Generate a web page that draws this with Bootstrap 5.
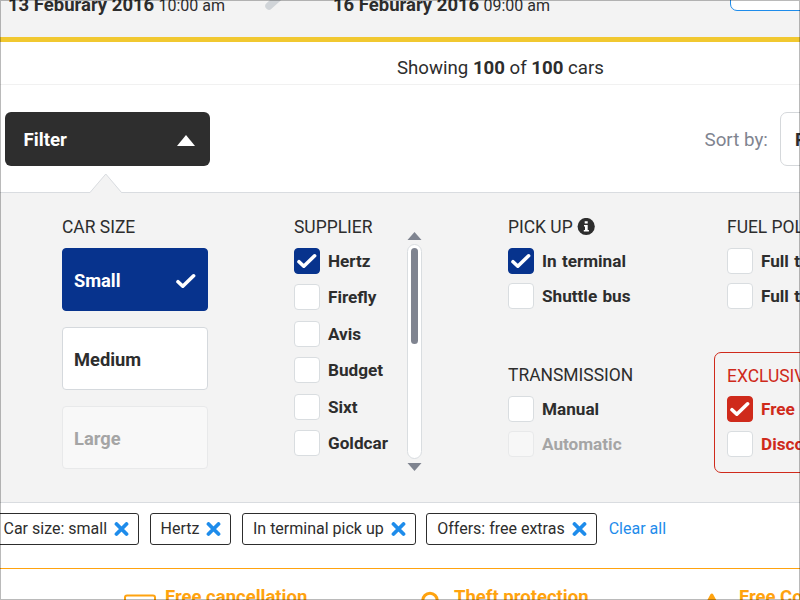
<!DOCTYPE html>
<html lang="en">
<head>
<meta charset="utf-8">
<title>Car hire filters</title>
<meta name="viewport" content="width=device-width, initial-scale=1">
<link href="https://cdn.jsdelivr.net/npm/bootstrap@5.3.0/dist/css/bootstrap.min.css" rel="stylesheet">
<style>
  body { font-family: Roboto, "Liberation Sans", sans-serif; color: #2d2d2d; font-size: 17px; line-height: 20px; background: #fff; }
  .screen { width: 800px; height: 600px; }
  .frame { inset: 0; border: 1px solid rgba(0,0,0,.27); pointer-events: none; z-index: 5; }
  .trip { height: 42px; background: #f3f3f3; border-bottom: 5px solid #f1c830; }
  .trip-date { height: 20px; margin-top: -5px; white-space: nowrap; }
  .trip-date b { font-size: 18.500px; }
  .trip-date span { font-size: 16px; }
  .from { width: 257px; margin-left: 8px; }
  .pen { width: 68px; height: 12px; }
  .to { width: 397px; }
  .change { width: 90px; height: 22px; margin-top: -11px; border: 1px solid #1e8ceb; border-radius: 7px; background: #fff; }
  .results { height: 43px; border-bottom: 1px solid #f1f1f1; padding: 10px 0 0 397px; font-size: 18.650px; white-space: nowrap; }
  .toolbar { height: 107px; padding: 27px 0 0 5px; }
  .filter-btn { width: 204.500px; height: 54px; padding: 2px 15px 0 18.500px; border-radius: 6px; background: #2e2e2e; color: #fff; font-weight: 700; font-size: 18.700px; border: 0; }
  .sort-label { color: #7f8490; font-size: 18.800px; line-height: 20px; padding-top: 18px; margin-left: 495px; width: 75.500px; white-space: nowrap; }
  .sort-box { width: 100px; height: 54px; border: 1px solid #d5d8db; border-radius: 7px; padding: 2px 0 0 14px; font-weight: 700; font-size: 18px; }
  .filters { height: 311px; background: #f3f3f3; border-top: 1px solid #d9dce0; border-bottom: 1px solid #d9dce0; padding: 24px 0 0 62px; }
  .pointer { left: 89px; top: -20px; }
  .c-size { width: 232px; } .c-supplier { width: 113px; } .c-scroll { width: 101px; padding-top: 15px; } .c-pick { width: 219px; } .c-fuel { width: 240px; }
  .group-title { font-size: 17.450px; height: 20px; white-space: nowrap; margin: 0; line-height: 20px; font-weight: 400; }
  .sizes { margin-top: 11px; }
  .size { width: 146px; height: 63px; margin-bottom: 16px; padding: 3px 11px 0 11px; border: 1px solid #d5d9dd; border-radius: 4px; background: #fff; font-weight: 700; font-size: 18.300px; }
  .size.on { background: #07338d; border-color: #07338d; color: #fff; }
  .size.off { background: #f8f8f8; border-color: #e8e9ea; color: #a5a5a5; }
  .opt { height: 27px; gap: 8px; font-weight: 700; font-size: 17.150px; word-spacing: 1px; white-space: nowrap; }
  .box { width: 26px; height: 26px; flex: none; border: 1px solid #d9dde0; border-radius: 4px; background: #fff; }
  .box.on { background: #07338d; border-color: #07338d; }
  .red .box.on { background: #cf2a1b; border-color: #cf2a1b; }
  .red { color: #cf2a1b; }
  .off .box { background: #f7f7f7; border-color: #e8e9ea; }
  .off { color: #a5a5a5; }
  .suppliers { gap: 9.600px; margin-top: 10px; } .pair { gap: 8.500px; margin-top: 10px; }
  .transmission { margin-top: 55px; }
  .transmission + .pair { margin-top: 11px; gap: 7.500px; }
  .track { width: 15px; height: 215px; border: 1px solid #d9dde0; border-radius: 8px; background: #fff; padding: 3px 3px; }
  .thumb { width: 7px; height: 96px; border-radius: 4px; background: #7f8490; }
  .exclusive { width: 240px; height: 121px; margin: 42px 0 0 -13.500px; border: 1px solid #cf2a1b; border-radius: 7px; padding: 13px 0 0 12.500px; }
  .exclusive .pair { margin-top: 10px; gap: 7.500px; }
  .exclusive .opt { word-spacing: 2.500px; }
  .chips { height: 65px; padding-top: 10px; gap: 10.500px; margin-left: -7.500px; }
  .chip-item { height: 32px; border: 1px solid #2d2d2d; border-radius: 3px; font-size: 16px; padding: 0 9px 0 10px; gap: 7px; white-space: nowrap; }
  .clear { color: #1e8ceb; font-size: 16px; text-decoration: none; line-height: 31px; margin-left: 1.500px; }
  .perks { height: 32px; border-top: 1px solid #ffa30f; color: #ffa30f; font-weight: 700; font-size: 18.500px; white-space: nowrap; padding-left: 123px; }
  .perks span { padding-top: 18px; }
  .perk-a { width: 297px; } .perk-b { width: 285px; }
</style>
</head>
<body>
<svg width="0" height="0" class="position-absolute">
  <symbol id="tick" viewBox="0 0 20 16"><path d="M2 8.700 6.800 13.200 17.600 2.800" fill="none" stroke="#fff" stroke-width="3.600" stroke-linecap="round" stroke-linejoin="round"/></symbol>
  <symbol id="cross" viewBox="0 0 15 15"><path d="M2.500 2 12.500 12M12.500 2 2.500 12" stroke="#1e8ceb" stroke-width="3.800" stroke-linecap="round"/></symbol>
</svg>
<main class="screen position-relative overflow-hidden">
  <header class="trip d-flex align-items-start overflow-hidden">
    <div class="trip-date from flex-shrink-0"><b>13 Feburary 2016</b> <span>10:00 am</span></div>
    <svg class="pen flex-shrink-0" width="68" height="12"><path d="M4 6 14-3" stroke="#d0d4d8" stroke-width="7.500" stroke-linecap="round"/></svg>
    <div class="trip-date to flex-shrink-0"><b>16 Feburary 2016</b> <span>09:00 am</span></div>
    <div class="change flex-shrink-0"></div>
  </header>
  <div class="results d-flex align-items-center"><span>Showing <b>100</b> of <b>100</b> cars</span></div>
  <div class="toolbar d-flex align-items-start">
    <button class="filter-btn d-flex align-items-center justify-content-between flex-shrink-0">Filter
      <svg width="18" height="11"><path d="M0 11 9 0 18 11z" fill="#fff"/></svg></button>
    <div class="sort-label flex-shrink-0">Sort by:</div>
    <div class="sort-box d-flex align-items-center flex-shrink-0">Price</div>
  </div>
  <section class="filters d-flex position-relative">
    <svg class="pointer position-absolute" width="34" height="21"><path d="M0 20.500 16.800 1 33.500 20.500" fill="#f3f3f3"/><path d="M0 19.500h1L16.800 1 32.500 19.500h1.500" fill="none" stroke="#d9dce0"/></svg>
    <div class="c-size flex-shrink-0">
      <h6 class="group-title">CAR SIZE</h6>
      <div class="sizes">
        <div class="size on d-flex align-items-center justify-content-between">Small<svg width="20" height="16"><use href="#tick"/></svg></div>
        <div class="size d-flex align-items-center">Medium</div>
        <div class="size off d-flex align-items-center">Large</div>
      </div>
    </div>
    <div class="c-supplier flex-shrink-0">
      <h6 class="group-title">SUPPLIER</h6>
      <div class="suppliers d-flex flex-column">
        <div class="opt d-flex align-items-center"><span class="box on d-flex align-items-center justify-content-center"><svg width="20" height="16"><use href="#tick"/></svg></span>Hertz</div>
        <div class="opt d-flex align-items-center"><span class="box"></span>Firefly</div>
        <div class="opt d-flex align-items-center"><span class="box"></span>Avis</div>
        <div class="opt d-flex align-items-center"><span class="box"></span>Budget</div>
        <div class="opt d-flex align-items-center"><span class="box"></span>Sixt</div>
        <div class="opt d-flex align-items-center"><span class="box"></span>Goldcar</div>
      </div>
    </div>
    <div class="c-scroll flex-shrink-0 d-flex flex-column">
      <svg width="15" height="8" class="flex-shrink-0 mb-1"><path d="M.5 8 7.500 0 14.500 8z" fill="#7f8490"/></svg>
      <div class="track flex-shrink-0"><div class="thumb"></div></div>
      <svg width="15" height="8" class="flex-shrink-0 mt-1"><path d="M.5 0h14L7.500 8z" fill="#7f8490"/></svg>
    </div>
    <div class="c-pick flex-shrink-0">
      <h6 class="group-title d-flex align-items-center">PICK UP<svg class="ms-1" width="18" height="18"><circle cx="9.200" cy="8.500" r="8.600" fill="#2d2d2d"/><path d="M7.700 3.200h3v2.300h-3zM7 6.900h3.700v5h1.200v1.500H6.800v-1.500H8V8.400H7z" fill="#fff"/></svg></h6>
      <div class="pair d-flex flex-column">
        <div class="opt d-flex align-items-center"><span class="box on d-flex align-items-center justify-content-center"><svg width="20" height="16"><use href="#tick"/></svg></span>In terminal</div>
        <div class="opt d-flex align-items-center"><span class="box"></span>Shuttle bus</div>
      </div>
      <h6 class="group-title transmission">TRANSMISSION</h6>
      <div class="pair d-flex flex-column">
        <div class="opt d-flex align-items-center"><span class="box"></span>Manual</div>
        <div class="opt off d-flex align-items-center"><span class="box"></span>Automatic</div>
      </div>
    </div>
    <div class="c-fuel flex-shrink-0">
      <h6 class="group-title">FUEL POLICY</h6>
      <div class="pair d-flex flex-column">
        <div class="opt d-flex align-items-center"><span class="box"></span>Full to full</div>
        <div class="opt d-flex align-items-center"><span class="box"></span>Full to empty</div>
      </div>
      <div class="exclusive red">
        <h6 class="group-title">EXCLUSIVE OFFERS</h6>
        <div class="pair d-flex flex-column">
          <div class="opt d-flex align-items-center"><span class="box on d-flex align-items-center justify-content-center"><svg width="20" height="16"><use href="#tick"/></svg></span>Free extras</div>
          <div class="opt d-flex align-items-center"><span class="box"></span>Discounts</div>
        </div>
      </div>
    </div>
  </section>
  <div class="chips d-flex align-items-start">
    <div class="chip-item d-flex align-items-center">Car size: small<svg width="15" height="15"><use href="#cross"/></svg></div>
    <div class="chip-item d-flex align-items-center">Hertz<svg width="15" height="15"><use href="#cross"/></svg></div>
    <div class="chip-item d-flex align-items-center">In terminal pick up<svg width="15" height="15"><use href="#cross"/></svg></div>
    <div class="chip-item d-flex align-items-center">Offers: free extras<svg width="15" height="15"><use href="#cross"/></svg></div>
    <a class="clear" href="#">Clear all</a>
  </div>
  <footer class="perks d-flex">
    <div class="perk-a d-flex flex-shrink-0">
      <svg width="42" height="31" class="flex-shrink-0"><rect x="2" y="26.500" width="30" height="20" rx="2" fill="none" stroke="#ffa30f" stroke-width="2"/></svg>
      <span>Free cancellation</span>
    </div>
    <div class="perk-b d-flex flex-shrink-0">
      <svg width="34" height="31" class="flex-shrink-0"><circle cx="10" cy="31.500" r="7.200" fill="none" stroke="#ffa30f" stroke-width="3"/></svg>
      <span>Theft protection</span>
    </div>
    <div class="d-flex flex-shrink-0">
      <svg width="34" height="31" class="flex-shrink-0"><path d="M6.800 26 3 33h7.600z" fill="#ffa30f" stroke="#ffa30f" stroke-width="3" stroke-linejoin="round"/></svg>
      <span>Free Collision</span>
    </div>
  </footer>
  <div class="frame position-absolute"></div>
</main>
<script src="https://cdn.jsdelivr.net/npm/bootstrap@5.3.0/dist/js/bootstrap.bundle.min.js"></script>
</body>
</html>
